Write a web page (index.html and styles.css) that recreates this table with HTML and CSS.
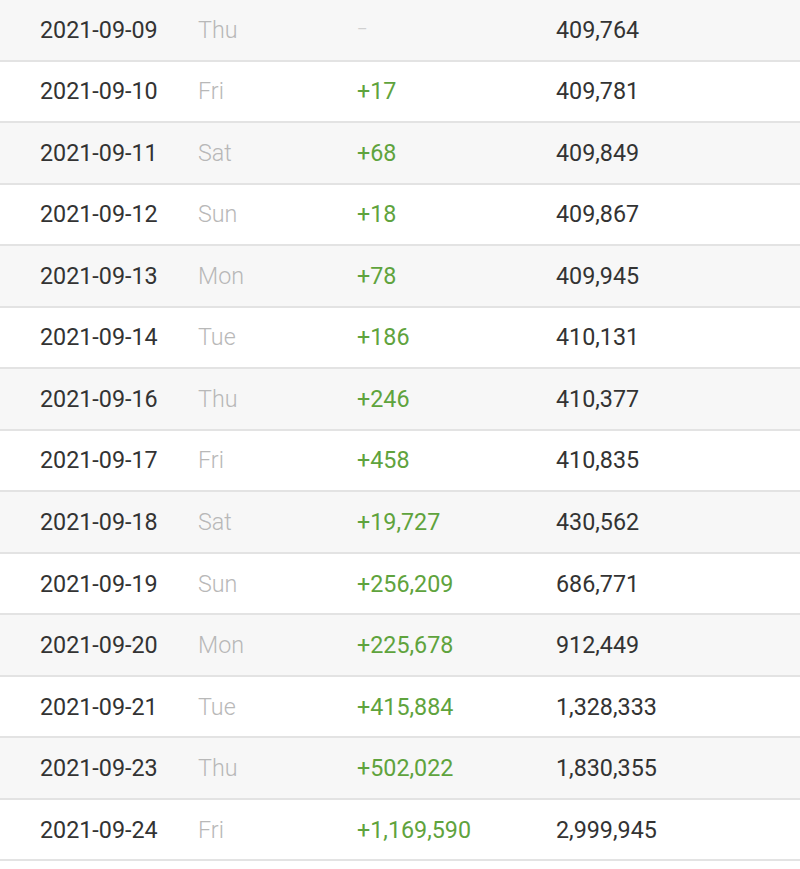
FILE: index.html
```html
<!DOCTYPE html>
<html>
<head>
<meta charset="utf-8">
<link rel="stylesheet" href="styles.css">
</head>
<body>
<div class="table">
  <div class="row odd"><span class="date">2021-09-09</span><span class="day">Thu</span><span class="chg none">–</span><span class="total">409,764</span></div>
  <div class="row"><span class="date">2021-09-10</span><span class="day">Fri</span><span class="chg">+17</span><span class="total">409,781</span></div>
  <div class="row odd"><span class="date">2021-09-11</span><span class="day">Sat</span><span class="chg">+68</span><span class="total">409,849</span></div>
  <div class="row"><span class="date">2021-09-12</span><span class="day">Sun</span><span class="chg">+18</span><span class="total">409,867</span></div>
  <div class="row odd"><span class="date">2021-09-13</span><span class="day">Mon</span><span class="chg">+78</span><span class="total">409,945</span></div>
  <div class="row"><span class="date">2021-09-14</span><span class="day">Tue</span><span class="chg">+186</span><span class="total">410,131</span></div>
  <div class="row odd"><span class="date">2021-09-16</span><span class="day">Thu</span><span class="chg">+246</span><span class="total">410,377</span></div>
  <div class="row"><span class="date">2021-09-17</span><span class="day">Fri</span><span class="chg">+458</span><span class="total">410,835</span></div>
  <div class="row odd"><span class="date">2021-09-18</span><span class="day">Sat</span><span class="chg">+19,727</span><span class="total">430,562</span></div>
  <div class="row"><span class="date">2021-09-19</span><span class="day">Sun</span><span class="chg">+256,209</span><span class="total">686,771</span></div>
  <div class="row odd"><span class="date">2021-09-20</span><span class="day">Mon</span><span class="chg">+225,678</span><span class="total">912,449</span></div>
  <div class="row"><span class="date">2021-09-21</span><span class="day">Tue</span><span class="chg">+415,884</span><span class="total">1,328,333</span></div>
  <div class="row odd"><span class="date">2021-09-23</span><span class="day">Thu</span><span class="chg">+502,022</span><span class="total">1,830,355</span></div>
  <div class="row"><span class="date">2021-09-24</span><span class="day">Fri</span><span class="chg">+1,169,590</span><span class="total">2,999,945</span></div>
</div>
</body>
</html>
```
FILE: styles.css
```css
html, body {
  margin: 0;
  padding: 0;
  background: #ffffff;
}
body {
  font-family: Roboto, "Liberation Sans", sans-serif;
  font-size: 23.3px;
}
.table {
  display: flex;
  flex-direction: column;
}
.row {
  box-sizing: border-box;
  height: 61.54px;
  display: grid;
  grid-template-columns: 158px 159px 199px 1fr;
  align-items: center;
  padding-left: 40px;
  border-bottom: 2px solid #e3e3e3;
  background: #ffffff;
}
.row.odd {
  background: #f7f7f7;
}
.date {
  color: #333333;
}
.day {
  color: #b8b8b8;
  font-weight: 300;
}
.chg {
  color: #5fa33d;
}
.chg.none {
  color: #d0d0d0;
  font-size: 16px;
}
.total {
  color: #333333;
}
```
